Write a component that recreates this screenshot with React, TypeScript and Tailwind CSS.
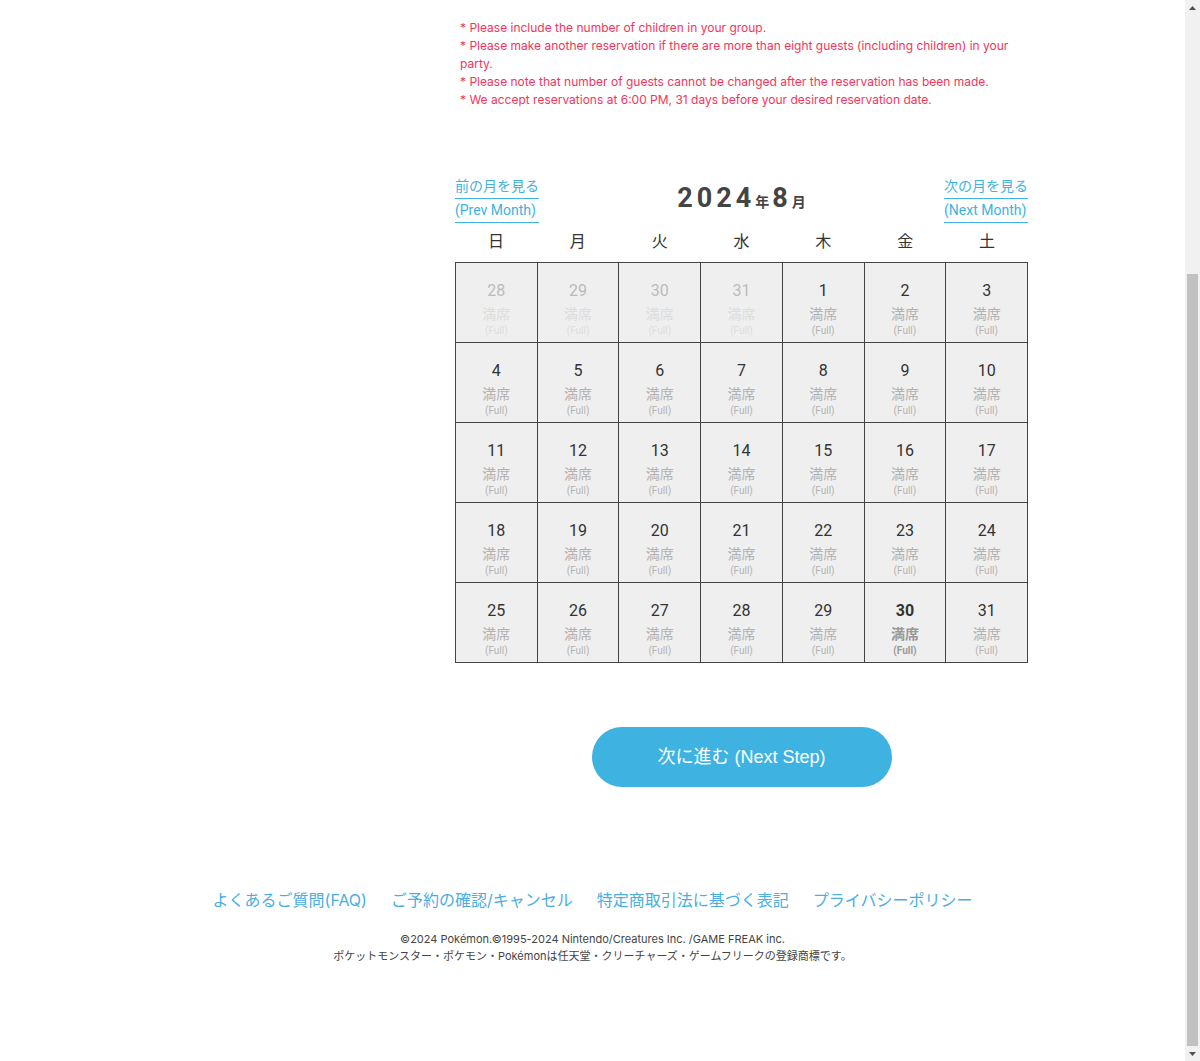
import React from "react";

type Day = { d: number; other?: boolean; today?: boolean };

const weeks: Day[][] = [
  [{ d: 28, other: true }, { d: 29, other: true }, { d: 30, other: true }, { d: 31, other: true }, { d: 1 }, { d: 2 }, { d: 3 }],
  [4, 5, 6, 7, 8, 9, 10].map((d) => ({ d })),
  [11, 12, 13, 14, 15, 16, 17].map((d) => ({ d })),
  [18, 19, 20, 21, 22, 23, 24].map((d) => ({ d })),
  [25, 26, 27, 28, 29, 30, 31].map((d) => ({ d, today: d === 30 })),
];

const dows = ["日", "月", "火", "水", "木", "金", "土"];

const notes = [
  "* Please include the number of children in your group.",
  "* Please make another reservation if there are more than eight guests (including children) in your party.",
  "* Please note that number of guests cannot be changed after the reservation has been made.",
  "* We accept reservations at 6:00 PM, 31 days before your desired reservation date.",
];

const footerLinks = ["よくあるご質問(FAQ)", "ご予約の確認/キャンセル", "特定商取引法に基づく表記", "プライバシーポリシー"];

const Cell = ({ day }: { day: Day }) => {
  const num = day.other ? "text-[#bbbbbb]" : "text-[#333333]";
  const sub = day.other ? "text-[#dddddd]" : day.today ? "text-[#999999]" : "text-[#b3b3b3]";
  return (
    <div className="h-[80px] border-r border-b border-[#444444] bg-[#efefef] flex flex-col items-center pt-[17px]">
      <span className={`text-[16px] leading-[22px] [font-family:Roboto,sans-serif] ${num} ${day.today ? "font-bold" : ""}`}>
        {day.d}
      </span>
      <span className={`text-[14px] leading-[23px] [font-family:'Noto_Sans_CJK_JP',sans-serif] ${sub} ${day.today ? "font-bold" : ""}`}>
        満席
      </span>
      <span className={`text-[10px] leading-[12px] [font-family:Roboto,sans-serif] ${sub} ${day.today ? "font-bold" : ""}`}>
        (Full)
      </span>
    </div>
  );
};

const MonthLink = ({ ja, en }: { ja: string; en: string }) => (
  <a className="flex flex-col text-[14px] text-[#3eb2e0] [font-family:Roboto,'Noto_Sans_CJK_JP',sans-serif] cursor-pointer">
    <span className="block leading-[22px] pb-[1px] border-b border-[#3eb2e0]">{ja}</span>
    <span className="block leading-[22px] pb-[1px] border-b border-[#3eb2e0]">{en}</span>
  </a>
);

const Arrow = ({ up }: { up?: boolean }) => (
  <div className="h-[15px] flex items-center justify-center">
    <svg width="7" height="4" viewBox="0 0 7 4">
      <path d={up ? "M0 4 L3.5 0 L7 4 Z" : "M0 0 L3.5 4 L7 0 Z"} fill="#505050" />
    </svg>
  </div>
);

const App = () => {
  return (
    <div className="flex w-full h-[1061px] overflow-hidden bg-white">
      <main className="flex-1 flex flex-col">
        <div className="flex">
          <div className="w-[455px] shrink-0" />
          <div className="w-[573px] flex flex-col">
            {/* notes */}
            <div className="pl-[5px] text-[12px] leading-[18px] text-[#f5345b] [font-family:Inter,sans-serif]">
              <p className="-mt-[17px] whitespace-nowrap">
                * Children aged 3 and up require a ticket (party) for entry, apply by group (yes).
              </p>
              <div className="mt-[18px]">
                {notes.map((n) => (
                  <p key={n}>{n}</p>
                ))}
              </div>
            </div>

            {/* month header */}
            <div className="mt-[66px] flex justify-between items-center">
              <MonthLink ja="前の月を見る" en="(Prev Month)" />
              <h2 className="text-[#444444] font-bold [font-family:Roboto,'Noto_Sans_CJK_JP',sans-serif] flex items-baseline -mt-[2px]">
                <span className="text-[27px] tracking-[4px]">2024</span>
                <span className="text-[14px] mr-[3px]">年</span>
                <span className="text-[27px] tracking-[4px]">8</span>
                <span className="text-[14px]">月</span>
              </h2>
              <MonthLink ja="次の月を見る" en="(Next Month)" />
            </div>

            {/* weekday row */}
            <div className="grid grid-cols-7 h-[39px] pb-[6px] items-center text-[16px] text-[#333333] [font-family:'Noto_Sans_CJK_JP',sans-serif]">
              {dows.map((w) => (
                <div key={w} className="text-center">
                  {w}
                </div>
              ))}
            </div>

            {/* calendar grid */}
            <div className="grid grid-cols-7 border-l border-t border-[#444444]">
              {weeks.flat().map((day, i) => (
                <Cell key={i} day={day} />
              ))}
            </div>

            <div className="flex justify-center mt-[64px]">
              <button className="w-[300px] h-[60px] rounded-full bg-[#3eb3e2] text-white text-[18px] [font-family:'Liberation_Sans','Noto_Sans_CJK_JP',sans-serif]">
                次に進む (Next Step)
              </button>
            </div>
          </div>
        </div>

        {/* footer */}
        <footer className="mt-[101px] flex flex-col items-center">
          <nav className="flex gap-[24px] text-[16px] leading-[24px] text-[#4aaee0] [font-family:Inter,'Noto_Sans_CJK_JP',sans-serif]">
            {footerLinks.map((l) => (
              <a key={l} className="cursor-pointer">
                {l}
              </a>
            ))}
          </nav>
          <div className="mt-[19px] text-center text-[11px] leading-[17px] text-[#444444] [font-family:Inter,'Noto_Sans_CJK_JP',sans-serif]">
            <p>©2024 Pokémon.©1995-2024 Nintendo/Creatures Inc. /GAME FREAK inc.</p>
            <p>ポケットモンスター・ポケモン・Pokémonは任天堂・クリーチャーズ・ゲームフリークの登録商標です。</p>
          </div>
        </footer>
      </main>

      {/* scrollbar */}
      <div className="w-[15px] shrink-0 bg-[#f1f1f1] flex flex-col">
        <Arrow up />
        <div className="h-[259px]" />
        <div className="h-[772px] mx-[2px] bg-[#c1c1c1]" />
        <Arrow />
      </div>
    </div>
  );
};

export default App;
